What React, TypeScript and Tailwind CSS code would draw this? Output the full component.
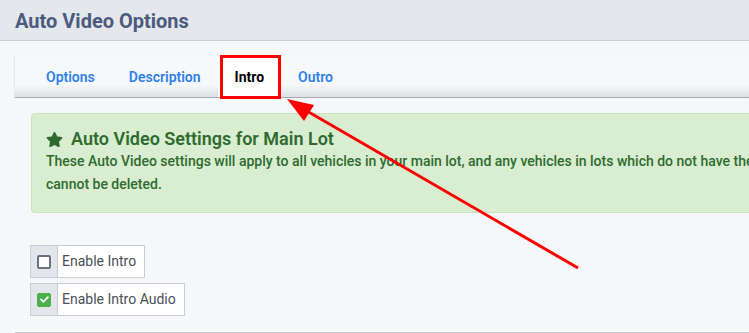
import { FaStar, FaCheck } from 'react-icons/fa'

const tabs = ['Options', 'Description', 'Intro', 'Outro']

function Toggle({ label, checked }: { label: string; checked?: boolean }) {
  return (
    <div className="flex h-[33px] w-fit border border-[#c9cdd3] bg-white">
      <div className="flex w-[27px] items-center justify-center border-r border-[#c9cdd3] bg-[#e3e6ea]">
        {checked ? (
          <span className="flex h-[14px] w-[14px] items-center justify-center rounded-[2px] bg-[#4cae4c]">
            <FaCheck className="h-[9px] w-[9px] text-white" />
          </span>
        ) : (
          <span className="h-[14px] w-[14px] rounded-[2px] border-2 border-[#6e6e82] bg-white" />
        )}
      </div>
      <span className="flex items-center pl-[4px] pr-[8px] text-[14px] text-[#4a4f57]">{label}</span>
    </div>
  )
}

export default function App() {
  return (
    <div className="relative h-[333px] w-[749px] overflow-hidden bg-[#f6f7f9] font-['Roboto',sans-serif]">
      <header className="flex h-[41px] items-center border-b border-[#c6cad1] bg-[#e4e7eb] pl-[15px]">
        <h1 className="pt-[1px] text-[20px] font-bold text-[#4b5a7e]">Auto Video Options</h1>
      </header>

      <div className="w-[1000px] pl-[15px] pt-[16px]">
        {/* tab strip fades to grey at its foot */}
        <nav className="flex h-[41px] border-b border-[#a9adb3] bg-[linear-gradient(to_bottom,#f7f8fa_0%,#f7f8fa_70%,#dcdfe3_100%)] pl-[14px] shadow-[-1px_0_1px_rgba(0,0,0,0.06)]">
          {tabs.map((t) => (
            <div
              key={t}
              className={
                t === 'Intro'
                  ? 'relative flex items-center bg-white px-[17px] pt-[1px] text-[14px] font-bold text-black'
                  : 'flex items-center px-[17px] pt-[1px] text-[14px] font-semibold text-[#2f80ed]'
              }
            >
              {t}
              {t === 'Intro' && (
                <span className="absolute -bottom-[2px] left-[2px] right-0 -top-[2px] border-[3px] border-[#f00]" />
              )}
            </div>
          ))}
        </nav>

        <div className="ml-[16px] mt-[15px] h-[100px] rounded-[4px] border border-[#c8e4b9] bg-[#d9edd0] pl-[14px] pt-[14px] text-[#2e6b2f]">
          <div className="flex items-center gap-[8px]">
            <FaStar className="h-[17px] w-[17px]" />
            <span className="text-[18px] font-semibold leading-[22px]">Auto Video Settings for Main Lot</span>
          </div>
          <p className="text-[14px] font-medium leading-[23px]">
            These Auto Video settings will apply to all vehicles in your main lot, and any vehicles in lots which do not have their own settings. These settings
            <br />
            cannot be deleted.
          </p>
        </div>

        <div className="ml-[15px] mt-[32px] flex flex-col gap-[5px]">
          <Toggle label="Enable Intro" />
          <Toggle label="Enable Intro Audio" checked />
        </div>

        <div className="mt-[16px] border-t border-[#c8ccd3]" />
      </div>

      {/* annotation arrow */}
      <svg className="pointer-events-none absolute left-0 top-0" width="749" height="333">
        <line x1="578" y1="268" x2="300" y2="107" stroke="#f00" strokeWidth="3" />
        <polygon points="287,99 314,105 304,121" fill="#f00" />
      </svg>
    </div>
  )
}
